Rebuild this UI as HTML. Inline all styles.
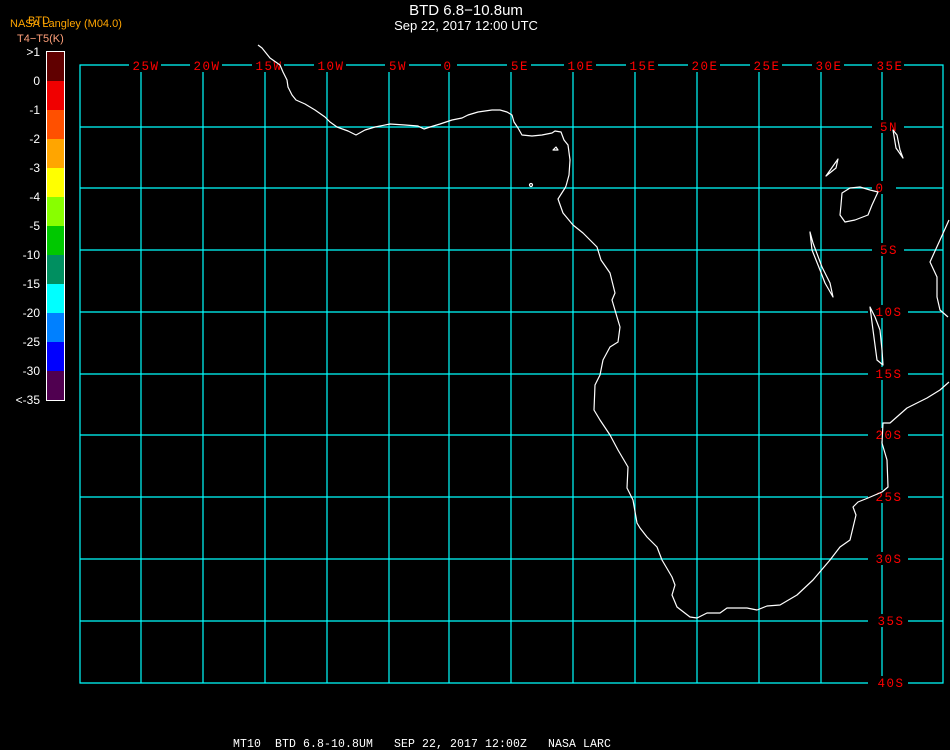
<!DOCTYPE html>
<html><head><meta charset="utf-8"><style>
html,body{margin:0;padding:0;background:#000;width:950px;height:750px;overflow:hidden}
svg{display:block}
</style></head><body>
<svg width="950" height="750" viewBox="0 0 950 750" xmlns="http://www.w3.org/2000/svg" font-family="Liberation Sans, sans-serif">
<rect width="950" height="750" fill="#000"/>
<g stroke="#00ffff" stroke-width="1.2" fill="none">
<path d="M80 65V683H943V65Z"/>
<path d="M141 65V683M203 65V683M265 65V683M327 65V683M389 65V683M449 65V683M511 65V683M573 65V683M635 65V683M697 65V683M759 65V683M821 65V683M882 65V683"/>
<path d="M80 127H943M80 188H943M80 250H943M80 312H943M80 374H943M80 435H943M80 497H943M80 559H943M80 621H943"/>
</g>
<g fill="#000">
<rect x="129" y="59" width="32" height="13"/><rect x="190" y="59" width="32" height="13"/><rect x="252" y="59" width="32" height="13"/><rect x="314" y="59" width="32" height="13"/><rect x="385" y="59" width="24" height="13"/><rect x="441" y="59" width="16" height="13"/><rect x="507" y="59" width="24" height="13"/><rect x="564" y="59" width="32" height="13"/><rect x="626" y="59" width="32" height="13"/><rect x="688" y="59" width="32" height="13"/><rect x="750" y="59" width="32" height="13"/><rect x="812" y="59" width="32" height="13"/><rect x="872" y="59" width="32" height="13"/>
<rect x="872" y="120" width="32" height="13"/><rect x="872" y="181" width="24" height="13"/><rect x="872" y="243" width="32" height="13"/><rect x="868" y="305" width="40" height="13"/><rect x="868" y="367" width="40" height="13"/><rect x="868" y="428" width="40" height="13"/><rect x="868" y="490" width="40" height="13"/><rect x="868" y="552" width="40" height="13"/><rect x="868" y="614" width="40" height="13"/><rect x="868" y="676" width="40" height="13"/>
</g>
<g fill="#ff0000" font-family="Liberation Mono, monospace" font-size="12.5" letter-spacing="1.5" text-anchor="middle">
<text x="146" y="70">25W</text><text x="207" y="70">20W</text><text x="269" y="70">15W</text><text x="331" y="70">10W</text><text x="398" y="70">5W</text><text x="448" y="70">0</text><text x="520" y="70">5E</text><text x="581" y="70">10E</text><text x="643" y="70">15E</text><text x="705" y="70">20E</text><text x="767" y="70">25E</text><text x="829" y="70">30E</text><text x="890" y="70">35E</text>
<text x="889" y="131">5N</text><text x="880" y="192">0</text><text x="889" y="254">5S</text><text x="889" y="316">10S</text><text x="889" y="378">15S</text><text x="889" y="439">20S</text><text x="889" y="501">25S</text><text x="889" y="563">30S</text><text x="891" y="625">35S</text><text x="891" y="687">40S</text>
</g>
<g stroke="#fff" stroke-width="1.2" fill="none" stroke-linejoin="round">
<path d="M258 45L262 48L266 53L270 58L280 65L283 72L287 80L288 87L292 95L296 100L305 104L315 110L325 117L330 122L337 127L348 131L356 135L365 130L375 127L390 124L405 125L418 126L424 129L430 127L440 124L452 120L462 118L468 115L478 112L492 110L500 110L507 112L512 115L514 122L518 128L522 135L532 136L542 135L552 133L555 131L561 132L564 140L568 145L570 160L569 175L566 186L565 188L558 199L563 213L573 225L583 233L597 247L601 260L610 273L615 293L612 300L617 317L620 327L618 342L610 347L603 360L600 375L595 385L594 410L600 420L610 435L618 450L628 467L627 488L633 500L637 523L640 528L647 537L657 547L662 560L672 577L675 585L672 595L677 607L690 617L697 618L707 613L720 613L727 608L747 608L757 610L767 606L780 605L797 595L813 580L830 560L840 547L850 540L856 515L853 507L858 502L868 498L882 492L888 487L887 460L882 443L883 423L890 423L907 408L927 398L940 390L949 382"/>
<path d="M949 220L940 240L930 262L937 277L937 297L940 310L948 317"/>
<path d="M810 232L812 250L820 270L825 283L833 297L830 283L822 267L813 243Z"/>
<path d="M870 307L873 330L877 360L883 365L882 350L880 330L875 317Z"/>
<path d="M842 193L850 188L860 187L870 190L878 192L872 205L868 215L855 220L845 222L840 215L841 205Z"/>
<path d="M826 176L838 159L836 168Z"/>
<path d="M893 130L896 148L903 158L900 150L897 135Z"/>
<path d="M553 150L556 147L558 150Z"/>
<circle cx="531" cy="185" r="1.5"/>
</g>
<text x="466" y="15" fill="#fff" font-size="15" text-anchor="middle">BTD 6.8−10.8um</text>
<text x="466" y="30" fill="#fff" font-size="13" text-anchor="middle">Sep 22, 2017 12:00 UTC</text>
<text x="10" y="27" fill="#ffa500" font-size="11">NASA Langley (M04.0)</text>
<text x="28" y="24" fill="#ffa500" font-size="11">BTD</text>
<text x="17" y="42" fill="#ffa07a" font-size="11">T4−T5(K)</text>
<g stroke="#fff" stroke-width="1"><rect x="46.5" y="51.5" width="18" height="349" fill="none"/></g>
<g>
<rect x="47" y="52" width="17" height="29" fill="#600000"/>
<rect x="47" y="81" width="17" height="29" fill="#f00000"/>
<rect x="47" y="110" width="17" height="29" fill="#ff5000"/>
<rect x="47" y="139" width="17" height="29" fill="#ffa500"/>
<rect x="47" y="168" width="17" height="29" fill="#ffff00"/>
<rect x="47" y="197" width="17" height="29" fill="#88ff00"/>
<rect x="47" y="226" width="17" height="29" fill="#00c800"/>
<rect x="47" y="255" width="17" height="29" fill="#008f60"/>
<rect x="47" y="284" width="17" height="29" fill="#00ffff"/>
<rect x="47" y="313" width="17" height="29" fill="#0080ff"/>
<rect x="47" y="342" width="17" height="29" fill="#0000ff"/>
<rect x="47" y="371" width="17" height="29" fill="#500050"/>
</g>
<g fill="#fff" font-size="12" text-anchor="end">
<text x="40" y="56">&gt;1</text><text x="40" y="85">0</text><text x="40" y="114">-1</text><text x="40" y="143">-2</text><text x="40" y="172">-3</text><text x="40" y="201">-4</text><text x="40" y="230">-5</text><text x="40" y="259">-10</text><text x="40" y="288">-15</text><text x="40" y="317">-20</text><text x="40" y="346">-25</text><text x="40" y="375">-30</text><text x="40" y="404">&lt;-35</text>
</g>
<text x="233" y="747" fill="#fff" font-family="Liberation Mono, monospace" font-size="11.5" letter-spacing="0.1" xml:space="preserve">MT10  BTD 6.8-10.8UM   SEP 22, 2017 12:00Z   NASA LARC</text>
</svg>
</body></html>
